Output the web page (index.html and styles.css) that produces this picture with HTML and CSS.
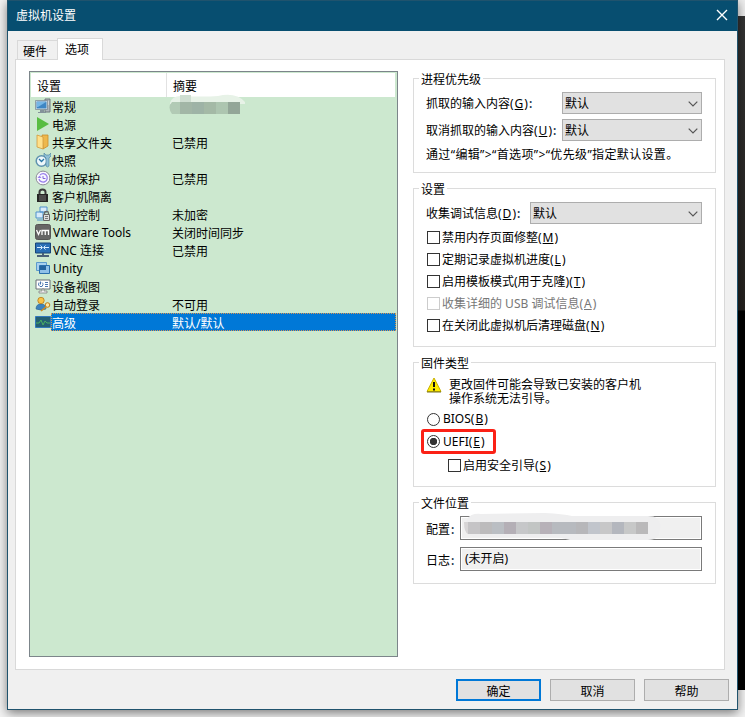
FILE: index.html
```html
<!DOCTYPE html>
<html lang="zh-CN">
<head>
<meta charset="utf-8">
<title>虚拟机设置</title>
<link rel="stylesheet" href="styles.css">
</head>
<body>
<div class="desktop">
<main class="window">
  <header class="titlebar"><span>虚拟机设置</span>
    <svg class="close" width="12" height="12" viewBox="0 0 12 12"><path d="M1 1l10 10M11 1L1 11" stroke="#fff" stroke-width="1.4"/></svg>
  </header>
  <nav class="tabs"><span class="tab">硬件</span><span class="tab active">选项</span></nav>
  <div class="page">
    <div class="list">
      <div class="row head"><span class="name">设置</span><span class="summary">摘要</span></div>
      <div class="row"><svg class="icon" viewBox="0 0 16 16"><path d="M10 1h5v13h-5z" fill="#aeb6ba" stroke="#6d777c"/><path d="M11 4h3M11 6h3" stroke="#eee"/><path d="M1 3h11v8H1z" fill="#3e86c4" stroke="#dfe6ea"/><path d="M.5 2.500h12v9H.5z" fill="none" stroke="#73818c" stroke-width=".7"/><path d="M2 4h9L3 9H2z" fill="#76b7e6"/><path d="M5 12h4v2h2v1H3v-1h2z" fill="#84929a"/></svg><span class="name">常规</span><span class="summary">
        <svg class="mosaic" width="78" height="20" viewBox="0 0 78 20"><path d="M2 9Q4 1 15 2Q35 3 50 2Q68-2 77 8v2H2z" fill="#e7f2e7"/><path d="M12 1h11v8H12z" fill="#cfded1"/><path d="M12 8H4Q-1 13 4 20h8z" fill="#b2cab5"/><path d="M12 8h12v12H12z" fill="#a2b6a6"/><path d="M24 8h12v12H24z" fill="#9eb3a6"/><path d="M36 8h12v12H36z" fill="#a4b9a6"/><path d="M48 8h12v12H48z" fill="#adc5b0"/><path d="M60 8h12v12H60z" fill="#93a698"/></svg></span></div>
      <div class="row"><svg class="icon" viewBox="0 0 16 16"><path d="M2 1l12 7-12 7z" fill="#58bd42"/></svg><span class="name">电源</span></div>
      <div class="row"><svg class="icon" viewBox="0 0 16 16"><path d="M7 1h6v11l-5 3z" fill="#eeb84c" stroke="#c98d2c" stroke-width=".8"/><path d="M2 1l6 2v12l-6-2z" fill="#ffe08a" stroke="#d09a3c" stroke-width=".8"/></svg><span class="name">共享文件夹</span><span class="summary">已禁用</span></div>
      <div class="row"><svg class="icon" viewBox="0 0 16 16"><circle cx="6.500" cy="9" r="5.300" fill="#edf7fb" stroke="#5f93ae" stroke-width="1.500"/><path d="M4 7l2.500 2.500L9 7" fill="none" stroke="#2777a6" stroke-width="1.300"/><path d="M9 1v3l2 2v8q1.500 2 3 0V6l2-2V1l-2 2h-3z" fill="#8fbfd6" stroke="#477f9c" stroke-width=".6"/></svg><span class="name">快照</span></div>
      <div class="row"><svg class="icon" viewBox="0 0 16 16"><circle cx="8" cy="8" r="6.900" fill="#f8f8ff" stroke="#8b8b94" stroke-width="1"/><path d="M4 9A4.200 4.200 0 1 0 5 5" fill="none" stroke="#9b81eb" stroke-width="1.300"/><path d="M2.500 8h4L4.500 5.500z" fill="#9b81eb"/><path d="M8 6v2.500h2.500" fill="none" stroke="#8264dc"/></svg><span class="name">自动保护</span><span class="summary">已禁用</span></div>
      <div class="row"><svg class="icon" viewBox="0 0 16 16"><path d="M4.500 7V4q0-2.500 3-2.500t3 2.500v3" fill="none" stroke="#3b3b3b" stroke-width="2"/><path d="M2 6h11v8H2z" fill="#252525"/><path d="M4 8h7M4 10h7M4 12h7" stroke="#888" stroke-width=".8"/></svg><span class="name">客户机隔离</span></div>
      <div class="row"><svg class="icon" viewBox="0 0 16 16"><path d="M5 1h7v5H5zM1 6h7v6H1z" fill="#d8ebfa" stroke="#4e91cc"/><path d="M2 14h6" stroke="#4e91cc"/><path d="M9.500 9V7q0-1.500 2-1.500t2 1.500v2" fill="none" stroke="#666" stroke-width="1.300"/><path d="M8.500 8.500h6v6h-6z" fill="#ddd" stroke="#666"/><path d="M10 10.500h3M10 12.500h3" stroke="#777"/></svg><span class="name">访问控制</span><span class="summary">未加密</span></div>
      <div class="row"><svg class="icon" viewBox="0 0 16 16"><rect x=".5" y=".5" width="15" height="15" rx="2" fill="#666" stroke="#555"/><path d="M1.500 6l2 4.500 2-4.500M7 11V6.500h6.500V11M10.250 7v4" fill="none" stroke="#fff" stroke-width="1.300"/></svg><span class="name latin">VMware Tools</span><span class="summary">关闭时间同步</span></div>
      <div class="row"><svg class="icon" viewBox="0 0 16 16"><path d="M.5 1h15v10H.5z" fill="#2a6fb5" stroke="#174477"/><path d="M2 5.500h5M9 5.500h5M5.500 3.500l2 2-2 2M10.500 3.500l-2 2 2 2" fill="none" stroke="#d8eeff"/><path d="M7 11h2v2h5v2H2v-2h5z" fill="#4a6078"/></svg><span class="name latin">VNC 连接</span><span class="summary">已禁用</span></div>
      <div class="row"><svg class="icon" viewBox="0 0 16 16"><path d="M1.500 2.500h10v8h-10z" fill="#a9d0ee" stroke="#5b9acc"/><path d="M4.500 5.500h10v8h-10z" fill="#8fc0e8" stroke="#2b6fac"/><path d="M5 6h6v4H5z" fill="#24639e"/></svg><span class="name latin">Unity</span></div>
      <div class="row"><svg class="icon" viewBox="0 0 16 16"><path d="M1 2h14v9H1z" fill="#fff" stroke="#696f77"/><path d="M7 11h2v2h3v2H4v-2h3z" fill="#eee" stroke="#777" stroke-width=".7"/><path d="M4 4.500q-1.500 3 1 4t3-2q0-1-1-2M5.500 3.500v3M10 4.500h3M10 6.500h3M10 8.500h3" fill="none" stroke="#4b75b0"/></svg><span class="name">设备视图</span></div>
      <div class="row"><svg class="icon" viewBox="0 0 16 16"><path d="M1 13q0-5 5-5t5 5q-5 2-10 0z" fill="#3e83bd" stroke="#27638e" stroke-width=".6"/><circle cx="6" cy="4.500" r="3.200" fill="#f8c449" stroke="#b67a1d" stroke-width=".8"/><circle cx="12.500" cy="9" r="2.300" fill="#ffe4a0" stroke="#bd7a15"/><path d="M11 11l-5 4" stroke="#d28c1d" stroke-width="1.600"/></svg><span class="name">自动登录</span><span class="summary">不可用</span></div>
      <div class="row selected"><svg class="icon" viewBox="0 0 16 16"><path d="M.5 2.500h15v11H.5z" fill="#246072" stroke="#3279bc"/><path d="M1 9h3l2-3 2 5 2-4 2 2h3" fill="none" stroke="#49af62"/></svg><div class="selection"><span class="name">高级</span><span class="summary">默认/默认</span></div></div>
    </div>
    <div class="groups">
      <section class="group priority">
        <h2>进程优先级</h2>
        <div class="field"><label>抓取的输入内容(<u>G</u>)<b>:</b></label><div class="select short">默认<svg width="10" height="6" viewBox="0 0 10 6"><path d="M.7.7L5 5 9.300.7"/></svg></div></div>
        <div class="field second"><label>取消抓取的输入内容(<u>U</u>)<b>:</b></label><div class="select short">默认<svg width="10" height="6" viewBox="0 0 10 6"><path d="M.7.7L5 5 9.300.7"/></svg></div></div>
        <p class="note">通过“编辑”&gt;“首选项”&gt;“优先级”指定默认设置<span class="stop">。</span></p>
      </section>
      <section class="group settings">
        <h2>设置</h2>
        <div class="field"><label>收集调试信息(<u>D</u>)<b>:</b></label><div class="select long">默认<svg width="10" height="6" viewBox="0 0 10 6"><path d="M.7.7L5 5 9.300.7"/></svg></div></div>
        <div class="checks">
          <label class="choice"><i class="box"></i><span>禁用内存页面修整(<u>M</u>)</span></label>
          <label class="choice"><i class="box"></i><span>定期记录虚拟机进度(<u>L</u>)</span></label>
          <label class="choice"><i class="box"></i><span>启用模板模式(用于克隆)(<u>T</u>)</span></label>
          <label class="choice disabled"><i class="box"></i><span>收集详细的 USB 调试信息(<u>A</u>)</span></label>
          <label class="choice"><i class="box"></i><span>在关闭此虚拟机后清理磁盘(<u>N</u>)</span></label>
        </div>
      </section>
      <section class="group firmware">
        <h2>固件类型</h2>
        <div class="warning"><svg width="16" height="16" viewBox="0 0 16 16"><path d="M8 1l7 13.500H1z" fill="#ffed00" stroke="#c8b000" stroke-linejoin="round"/><path d="M1 15h14" stroke="#77721c"/><path d="M8 5v5M8 11.500v2" stroke="#111" stroke-width="2"/></svg><p>更改固件可能会导致已安装的客户机<br>操作系统无法引导。</p></div>
        <label class="choice"><i class="radio"></i><span>BIOS(<u>B</u>)</span></label>
        <label class="choice marked"><i class="radio on"></i><span>UEFI(<u>E</u>)</span></label>
        <label class="choice nested"><i class="box"></i><span>启用安全引导(<u>S</u>)</span></label>
      </section>
      <section class="group files">
        <h2>文件位置</h2>
        <div class="field"><label>配置<b>:</b></label><div class="path">
          <svg class="redacted" width="198" height="29" viewBox="0 0 198 29"><path d="M4 7Q8 1 18 2L82 1Q100 2 109 4h76Q199 4 197 17Q197 28 185 28h-78L94 25H14Q4 25 1 15z" fill="#eeeeef"/><path d="M1 10h4v12Q1 20 1 10" fill="#d7d5d6"/><path d="M5 10h12v12H5z" fill="#c5c4c6"/><path d="M17 10h12v12H17z" fill="#bcbbbc"/><path d="M29 10h12v12H29z" fill="#babec3"/><path d="M41 10h12v12H41z" fill="#b4afb6"/><path d="M53 10h12v12H53z" fill="#c6c7c9"/><path d="M65 10h12v12H65z" fill="#c2c5c4"/><path d="M77 10h12v12H77z" fill="#b7b1b8"/><path d="M89 10h24v12H89z" fill="#b7babf"/><path d="M113 10h12v12h-12z" fill="#b7b7ba"/><path d="M125 10h12v12h-12z" fill="#c1c5cc"/><path d="M137 10h12v12h-12z" fill="#c7c7c8"/><path d="M149 10h12v12h-12z" fill="#b4b7be"/><path d="M161 10h12v12h-12z" fill="#c7c8c8"/><path d="M173 10h12v12h-12z" fill="#bab9ba"/></svg>
        </div></div>
        <div class="field log"><label>日志<b>:</b></label><div class="path">(未开启)</div></div>
      </section>
    </div>
  </div>
  <footer><span class="button primary">确定</span><span class="button">取消</span><span class="button">帮助</span></footer>
</main>
<aside class="backdrop"></aside>
</div>
</body>
</html>
```

FILE: styles.css
```css
* { box-sizing: border-box; }
body { margin: 0; background: #f3f3f3; color: #000; font: 12px/18px "Noto Sans", "Noto Sans CJK SC", sans-serif; white-space: nowrap; overflow: hidden; }
h2, p { margin: 0; font: inherit; }
b { font-weight: 600; color: #24364e; margin-left: 1px; }
u { text-underline-offset: 1px; text-decoration-thickness: 1px; margin: 0 1px; }
svg { display: block; flex: none; }
.stop { font-family: "Noto Sans CJK TC", sans-serif; line-height: 1; }
.desktop { display: flex; height: 717px; padding-left: 7px; }
.window { width: 731px; height: 710px; background: #f0f0f0; border: 1px solid #20536d; box-shadow: 0 3px 10px rgba(0,0,0,.5); z-index: 1; flex: none; }
.backdrop { width: 7px; height: 690px; background: linear-gradient(#eee 0 16px, #333 16px, #24211e 310px, #000 311px); }
.titlebar { height: 30px; background: #074e70; color: #fff; display: flex; align-items: center; justify-content: space-between; padding: 0 9px 0 8px; }
.close { margin-top: -2px; }
.tabs { height: 28px; padding: 7px 0 0 9px; display: flex; align-items: flex-end; }
.tab { width: 41px; height: 19px; border: 1px solid #d9d9d9; border-bottom: 0; padding-left: 5px; line-height: 21px; }
.tab.active { width: 46px; height: 22px; margin: 0 0 -1px -1px; background: #fff; padding-left: 7px; line-height: 21px; z-index: 1; }
.page { width: 710px; height: 611px; margin-left: 7px; background: #fff; border: 1px solid #d9d9d9; padding: 11px 0 0 13px; display: flex; }
.list { width: 369px; height: 586px; border: 1px solid #7c858a; background: #cce8cf; padding: 1px 1px 0; flex: none; }
.row { display: flex; height: 18px; padding-left: 4px; align-items: center; }
.row.head { height: 24px; background: #fff; padding-left: 6px; margin-right: 1px; }
.head .name { width: 130px; border-right: 1px solid #e2e2e2; height: 24px; line-height: 27px; padding: 0; }
.head .summary { padding-left: 6px; line-height: 27px; height: 24px; }
.icon { width: 16px; height: 16px; }
.name { width: 120px; padding-left: 1px; line-height: 22px; height: 18px; }
.name.latin { padding-left: 2px; line-height: 20px; }
.summary { line-height: 22px; height: 18px; padding-left: 1px; }
.selection { display: flex; flex: 1; height: 18px; background: #0078d7; color: #fff; outline: 1px dotted #d99450; outline-offset: -1px; }
.mosaic { margin: -3px 0 0 -4px; }
.groups { width: 303px; margin: 7px 0 0 15px; }
.group { border: 1px solid #dcdcdc; width: 303px; padding: 0 13px 0 12px; margin-bottom: 15px; }
.group h2 { width: fit-content; background: #fff; height: 18px; line-height: 18px; margin: -8px 0 3px -7px; padding: 0 2px; }
.priority { height: 95px; }
.settings { height: 159px; }
.firmware { height: 125px; }
.files { height: 82px; }
.field { display: flex; justify-content: space-between; align-items: center; height: 22px; }
.field label { padding-top: 2px; }
.second { margin-top: 5px; }
.select { height: 22px; border: 1px solid #adadad; background: #e1e1e1; display: flex; align-items: center; justify-content: space-between; padding: 1px 3px 0 2px; }
.select svg path { fill: none; stroke: #555; stroke-width: 1.200; }
.short { width: 140px; }
.long { width: 172px; }
.note { margin-top: 5px; letter-spacing: .36px; }
.choice { display: flex; align-items: center; height: 22px; }
.choice span { padding: 2px 0 0 2px; }
.box, .radio { width: 13px; height: 13px; border: 1px solid #333; background: #fff; flex: none; margin-left: 1px; }
.checks { margin-top: 2px; }
.disabled { color: #777; }
.disabled .box { border-color: #ccc; }
.radio { border-radius: 50%; }
.radio + span { padding: 0 0 0 3px; }
.radio.on { background: radial-gradient(circle, #333 0 3.400px, #fff 4px); }
.warning { display: flex; height: 28px; line-height: 14px; margin: 4px 0 3px; }
.warning p { padding: 1px 0 0 7px; }
.marked { border: 3px solid #fb2116; border-radius: 3px; width: 75px; height: 25px; margin: -1px 0 0 -5px; padding-left: 2px; }
.nested { margin-left: 21px; }
.path { width: 242px; height: 24px; border: 1px solid #7a7a7a; background: #f0f0f0; box-shadow: inset 0 0 0 1px #fff; padding-left: 4px; line-height: 22px; }
.files .field { height: 24px; }
.files .log { margin-top: 7px; }
.files .field label { padding-top: 4px; }
.redacted { margin: -5px 0 0 -2px; }
footer { display: flex; gap: 9px; padding: 9px 8px 0 448px; }
.button { width: 85px; height: 22px; border: 1px solid #adadad; background: #e1e1e1; text-align: center; line-height: 23px; }
.primary { border: 2px solid #0078d7; line-height: 21px; }
```
